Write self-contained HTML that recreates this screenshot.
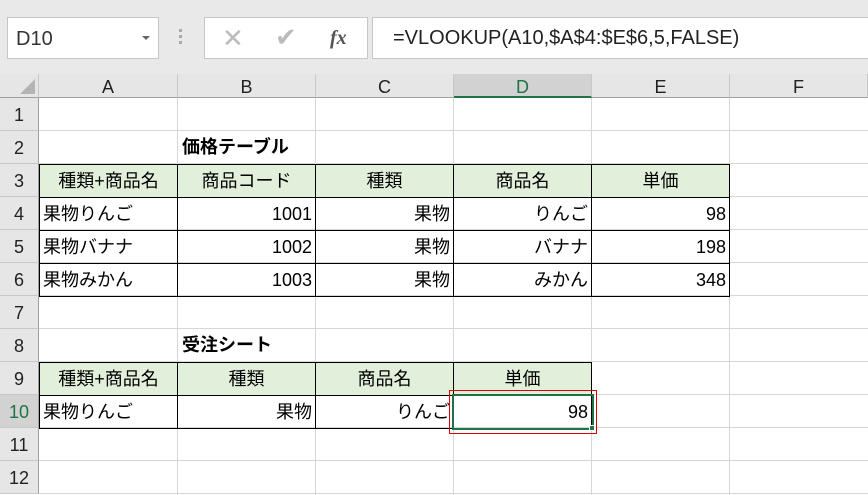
<!DOCTYPE html><html><head><meta charset="utf-8"><style>
body{margin:0;width:868px;height:495px;overflow:hidden;background:#fff;font-family:"Liberation Sans","Noto Sans CJK JP",sans-serif;position:relative}
div{position:absolute;box-sizing:border-box}
.top{left:0;top:0;width:868px;height:74px;background:#e9e9e9}
.box{background:#fff;border:1px solid #c6c6c6}
.ch{top:74px;height:24px;background:#e6e6e6;border-right:1px solid #c8c8c8;border-bottom:1px solid #a0a0a0;text-align:center;font-size:18px;line-height:26px;color:#222}
.rh{left:0;width:39px;height:33px;background:#e6e6e6;border-bottom:1px solid #c8c8c8;border-right:1px solid #a0a0a0;text-align:center;font-size:18px;line-height:34px;color:#222}
.vl{top:98px;width:1px;height:397px;background:#d6d6d6}
.hl{left:39px;width:829px;height:1px;background:#d6d6d6}
.c{height:34px;width:139px;border:1px solid #000;font-size:18px;line-height:32px;padding:0 3px;white-space:nowrap;color:#000}
.h{background:#e2efda;text-align:center}
.r{text-align:right}
</style></head><body>
<div class="top"></div>
<div class="box" style="left:7px;top:17px;width:152px;height:42px;font-size:20px;line-height:42px;padding-left:8px;color:#333">D10</div>
<div style="left:142px;top:36px;width:0;height:0;border-left:4px solid transparent;border-right:4px solid transparent;border-top:4px solid #666"></div>
<div style="left:179px;top:29px;width:3px;height:3px;background:#aaa;box-shadow:0 6px 0 #aaa,0 12px 0 #aaa"></div>
<div class="box" style="left:204px;top:17px;width:164px;height:42px"></div>
<div style="left:222px;top:23px;font-size:26px;color:#bbb">✕</div>
<div style="left:275px;top:22px;font-size:26px;color:#bbb">✔</div>
<div style="left:330px;top:27px;font-size:20px;font-style:italic;font-family:'Liberation Serif',serif;color:#555;font-weight:bold">fx</div>
<div class="box" style="left:372px;top:17px;width:500px;height:42px;font-size:20px;line-height:40px;padding-left:20px;color:#222">=VLOOKUP(A10,$A$4:$E$6,5,FALSE)</div>
<div style="left:0;top:74px;width:39px;height:24px;background:#e6e6e6;border-right:1px solid #c8c8c8;border-bottom:1px solid #a0a0a0"></div>
<div style="left:20px;top:79px;width:0;height:0;border-left:15px solid transparent;border-bottom:15px solid #b4b4b4"></div>
<div class="ch" style="left:39px;width:139px">A</div>
<div class="ch" style="left:178px;width:138px">B</div>
<div class="ch" style="left:316px;width:138px">C</div>
<div class="ch" style="left:454px;width:138px;background:#d2d2d2;color:#217346;border-bottom:2px solid #217346">D</div>
<div class="ch" style="left:592px;width:138px">E</div>
<div class="ch" style="left:730px;width:138px">F</div>
<div class="vl" style="left:177px"></div><div class="vl" style="left:315px"></div><div class="vl" style="left:453px"></div><div class="vl" style="left:591px"></div><div class="vl" style="left:729px"></div>
<div class="hl" style="top:130px"></div><div class="hl" style="top:163px"></div><div class="hl" style="top:196px"></div><div class="hl" style="top:229px"></div><div class="hl" style="top:262px"></div><div class="hl" style="top:295px"></div><div class="hl" style="top:328px"></div><div class="hl" style="top:361px"></div><div class="hl" style="top:394px"></div><div class="hl" style="top:427px"></div><div class="hl" style="top:460px"></div><div class="hl" style="top:493px"></div>
<div class="rh" style="top:98px">1</div><div class="rh" style="top:131px">2</div><div class="rh" style="top:164px">3</div><div class="rh" style="top:197px">4</div><div class="rh" style="top:230px">5</div><div class="rh" style="top:263px">6</div><div class="rh" style="top:296px">7</div><div class="rh" style="top:329px">8</div><div class="rh" style="top:362px">9</div><div class="rh" style="top:395px;background:#d2d2d2;color:#217346">10</div><div class="rh" style="top:428px">11</div><div class="rh" style="top:461px">12</div>
<div style="left:182px;top:131px;font-size:18px;line-height:33px;font-weight:bold">価格テーブル</div>
<div style="left:182px;top:329px;font-size:18px;line-height:33px;font-weight:bold">受注シート</div>
<div class="c h" style="left:39px;top:164px">種類+商品名</div>
<div class="c h" style="left:177px;top:164px">商品コード</div>
<div class="c h" style="left:315px;top:164px">種類</div>
<div class="c h" style="left:453px;top:164px">商品名</div>
<div class="c h" style="left:591px;top:164px">単価</div>
<div class="c" style="left:39px;top:197px">果物りんご</div>
<div class="c r" style="left:177px;top:197px">1001</div>
<div class="c r" style="left:315px;top:197px">果物</div>
<div class="c r" style="left:453px;top:197px">りんご</div>
<div class="c r" style="left:591px;top:197px">98</div>
<div class="c" style="left:39px;top:230px">果物バナナ</div>
<div class="c r" style="left:177px;top:230px">1002</div>
<div class="c r" style="left:315px;top:230px">果物</div>
<div class="c r" style="left:453px;top:230px">バナナ</div>
<div class="c r" style="left:591px;top:230px">198</div>
<div class="c" style="left:39px;top:263px">果物みかん</div>
<div class="c r" style="left:177px;top:263px">1003</div>
<div class="c r" style="left:315px;top:263px">果物</div>
<div class="c r" style="left:453px;top:263px">みかん</div>
<div class="c r" style="left:591px;top:263px">348</div>
<div class="c h" style="left:39px;top:362px">種類+商品名</div>
<div class="c h" style="left:177px;top:362px">種類</div>
<div class="c h" style="left:315px;top:362px">商品名</div>
<div class="c h" style="left:453px;top:362px">単価</div>
<div class="c" style="left:39px;top:395px">果物りんご</div>
<div class="c r" style="left:177px;top:395px">果物</div>
<div class="c r" style="left:315px;top:395px">りんご</div>
<div class="c r" style="left:453px;top:395px">98</div>
<div style="left:449px;top:390px;width:148px;height:44px;border:1px solid #e00000"></div>
<div style="left:452px;top:394px;width:142px;height:36px;border:2px solid #217346"></div>
<div style="left:589px;top:425px;width:6px;height:6px;background:#217346;border:1px solid #fff"></div>
</body></html>
